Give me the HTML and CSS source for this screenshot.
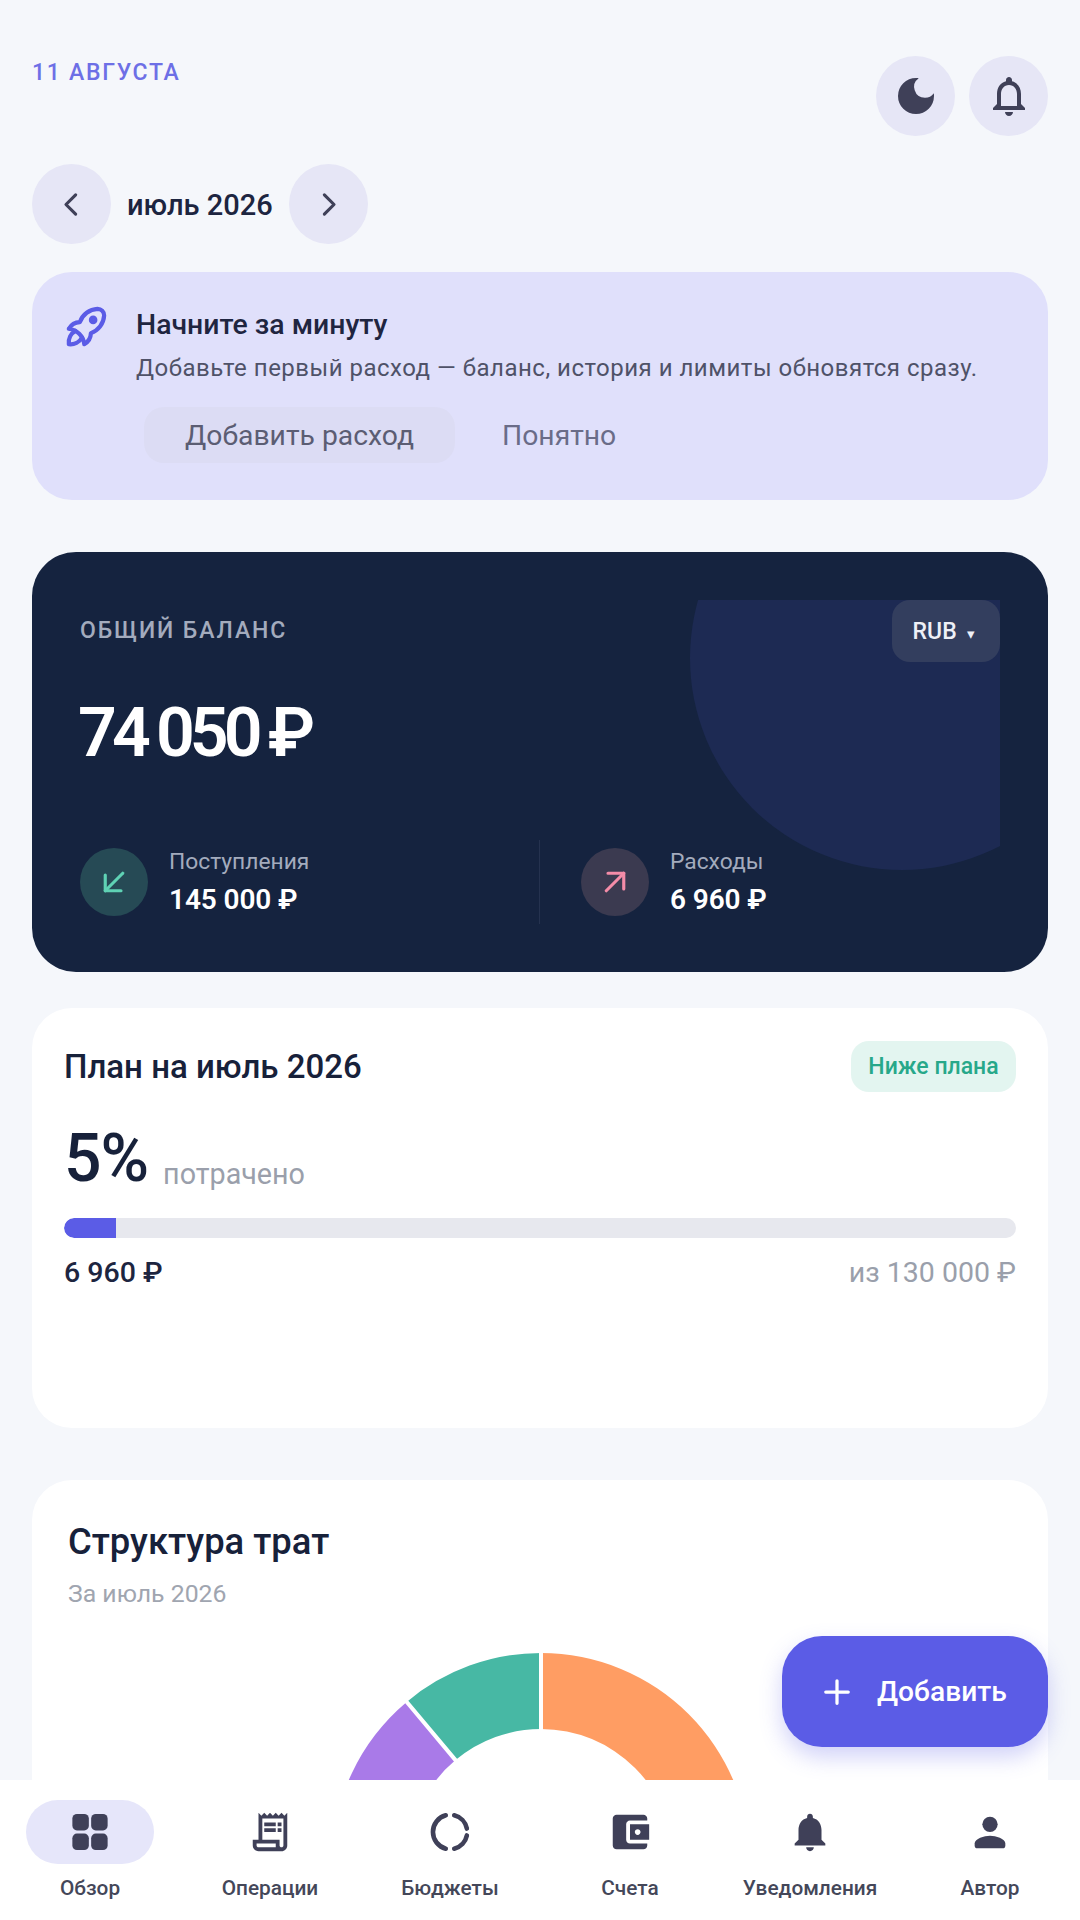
FILE: index.html
```html
<!DOCTYPE html>
<html lang="ru">
<head>
<meta charset="utf-8">
<title>Обзор</title>
<link rel="stylesheet" href="styles.css">
</head>
<body>
<div class="app">
  <main class="page">
    <header class="top">
      <div class="date">11 АВГУСТА</div>
      <div class="top-actions">
        <button class="round"><svg class="ic-48" viewBox="0 0 24 24"><path d="M12 3a9 9 0 1 0 9 9c0-.46-.04-.92-.1-1.36a5.389 5.389 0 0 1-4.4 2.26 5.403 5.403 0 0 1-3.14-9.8c-.44-.06-.9-.1-1.36-.1z"/></svg></button>
        <button class="round"><svg class="ic-48" viewBox="0 0 24 24"><path d="M12 22c1.1 0 2-.9 2-2h-4c0 1.1.9 2 2 2zm6-6v-5c0-3.07-1.63-5.64-4.5-6.32V4c0-.83-.67-1.5-1.5-1.5s-1.5.67-1.5 1.5v.68C7.64 5.36 6 7.92 6 11v5l-2 2v1h16v-1l-2-2zm-2 1H8v-6c0-2.48 1.51-4.5 4-4.5s4 2.02 4 4.5v6z"/></svg></button>
      </div>
    </header>

    <div class="month">
      <button class="round"><svg class="chev" viewBox="0 0 24 24"><path d="M15 5l-7 7 7 7"/></svg></button>
      <span class="month-label">июль 2026</span>
      <button class="round"><svg class="chev" viewBox="0 0 24 24"><path d="M9 5l7 7-7 7"/></svg></button>
    </div>

    <section class="banner">
      <svg class="rocket" viewBox="0 0 24 24"><path d="M4 13a8 8 0 0 1 7 7a6 6 0 0 0 3-5a9 9 0 0 0 6-8a3 3 0 0 0-3-3a9 9 0 0 0-8 6a6 6 0 0 0-5 3"/><path d="M7 14a6 6 0 0 0-3 6a6 6 0 0 0 6-3"/><circle cx="15" cy="9" r="1"/></svg>
      <div class="banner-body">
        <h2 class="banner-title">Начните за минуту</h2>
        <p class="banner-text">Добавьте первый расход — баланс, история и лимиты обновятся сразу.</p>
        <div class="banner-actions">
          <button class="btn-soft">Добавить расход</button>
          <button class="btn-text">Понятно</button>
        </div>
      </div>
    </section>

    <section class="balance">
      <div class="deco"><div class="deco-circle"></div></div>
      <div class="balance-head">
        <div class="balance-label">ОБЩИЙ БАЛАНС</div>
        <button class="currency">RUB <span class="caret">▾</span></button>
      </div>
      <div class="balance-sum">74 050 ₽</div>
      <div class="stats">
        <div class="stat">
          <span class="stat-icon in"><svg viewBox="0 0 24 24"><path d="M17 7L7 17"/><path d="M16 17H7V8"/></svg></span>
          <div><div class="stat-label">Поступления</div><div class="stat-value">145 000 ₽</div></div>
        </div>
        <div class="stat stat-right">
          <span class="stat-icon out"><svg viewBox="0 0 24 24"><path d="M7 17L17 7"/><path d="M8 7h9v9"/></svg></span>
          <div><div class="stat-label">Расходы</div><div class="stat-value">6 960 ₽</div></div>
        </div>
      </div>
    </section>

    <section class="plan">
      <div class="plan-head">
        <h2 class="plan-title">План на июль 2026</h2>
        <span class="badge">Ниже плана</span>
      </div>
      <div class="plan-pct"><span class="pct">5%</span><span class="pct-note">потрачено</span></div>
      <div class="bar"><div class="bar-fill" style="width:5.5%"></div></div>
      <div class="plan-foot"><span class="spent">6 960 ₽</span><span class="limit">из 130 000 ₽</span></div>
    </section>

    <section class="structure">
      <h2 class="structure-title">Структура трат</h2>
      <div class="structure-sub">За июль 2026</div>
      <svg class="donut" viewBox="-210 -210 420 420">
        <path fill="#ff9d63" d="M0-209A209 209 0 0 1 209 0L133 0A133 133 0 0 0 0-133Z"/>
        <path fill="#47b8a4" d="M0-209A209 209 0 0 0-134.3-160.1L-85.5-101.9A133 133 0 0 1 0-133Z"/>
        <path fill="#a97ae8" d="M-134.3-160.1A209 209 0 0 0-209 0L-133 0A133 133 0 0 1-85.5-101.9Z"/>
        <path class="gap" d="M0-212V-130M-136.3-162.5L-83.6-99.6"/>
      </svg>
    </section>
  </main>

  <button class="fab"><svg viewBox="0 0 24 24"><path d="M12 3v18M3 12h18"/></svg>Добавить</button>

  <nav class="nav">
    <a class="nav-item active"><span class="nav-icon"><svg viewBox="0 0 24 24"><rect x="2.8" y="2.6" width="8.6" height="8.6" rx="2.4"/><rect x="12.6" y="2.6" width="8.6" height="8.6" rx="2.4"/><rect x="2.8" y="12.8" width="8.6" height="8.6" rx="2.4"/><rect x="12.6" y="12.8" width="8.6" height="8.6" rx="2.4"/></svg></span><span class="nav-label">Обзор</span></a>
    <a class="nav-item"><span class="nav-icon"><svg viewBox="0 0 24 24"><path d="M19.5 3.5 18 2l-1.5 1.5L15 2l-1.5 1.5L12 2l-1.5 1.5L9 2 7.5 3.5 6 2v14H3v3c0 1.66 1.34 3 3 3h12c1.66 0 3-1.34 3-3V2l-1.5 1.5zM15 20H6c-.55 0-1-.45-1-1v-1h10v2zm4-1c0 .55-.45 1-1 1s-1-.45-1-1v-3H8V5h11v14z"/><path d="M9 7h6v2H9zm7 0h2v2h-2zm-7 3h6v2H9zm7 0h2v2h-2z"/></svg></span><span class="nav-label">Операции</span></a>
    <a class="nav-item"><span class="nav-icon"><svg viewBox="0 0 24 24"><path class="ring" d="M9.8 3.3A9 9 0 0 0 9.8 20.7M14.2 3.3A9 9 0 0 1 20.8 10.2M20.8 13.8A9 9 0 0 1 14.2 20.7"/></svg></span><span class="nav-label">Бюджеты</span></a>
    <a class="nav-item"><span class="nav-icon"><svg viewBox="0 0 24 24"><path d="M21 18v1c0 1.1-.9 2-2 2H5c-1.11 0-2-.9-2-2V5c0-1.1.89-2 2-2h14c1.1 0 2 .9 2 2v1h-9c-1.11 0-2 .9-2 2v8c0 1.1.89 2 2 2h9zm-9-2h10V8H12v8zm4-2.5c-.83 0-1.5-.67-1.5-1.5s.67-1.5 1.5-1.5 1.5.67 1.5 1.5-.67 1.5-1.5 1.5z"/></svg></span><span class="nav-label">Счета</span></a>
    <a class="nav-item"><span class="nav-icon"><svg viewBox="0 0 24 24"><path d="M12 22c1.1 0 2-.9 2-2h-4c0 1.1.89 2 2 2zm6-6v-5c0-3.07-1.64-5.64-4.5-6.32V4c0-.83-.67-1.5-1.5-1.5s-1.5.67-1.5 1.5v.68C7.63 5.36 6 7.92 6 11v5l-2 2v1h16v-1l-2-2z"/></svg></span><span class="nav-label">Уведомления</span></a>
    <a class="nav-item"><span class="nav-icon"><svg viewBox="0 0 24 24"><circle cx="12" cy="8" r="4"/><path d="M12 14c-3 0-8 1.5-8 4v1a1.5 1.5 0 0 0 1.5 1.5h13A1.5 1.5 0 0 0 20 19v-1c0-2.5-5-4-8-4z"/></svg></span><span class="nav-label">Автор</span></a>
  </nav>
</div>
</body>
</html>
```
FILE: styles.css
```css
* { box-sizing: border-box; }
html, body { margin: 0; padding: 0; }
body { font-family: Roboto, "Noto Sans", sans-serif; color: #14213d; background: #f5f7fb; }
button { font-family: inherit; border: 0; padding: 0; background: none; color: inherit; }
h2, p { margin: 0; }

.app { position: relative; width: 1080px; height: 1920px; overflow: hidden; background: #f5f7fb; }
.page { padding: 56px 32px 0; display: flex; flex-direction: column; }

.top { display: flex; justify-content: space-between; align-items: flex-start; }
.date { margin-top: 2px; font-size: 23px; line-height: 30px; font-weight: 500; letter-spacing: 1.7px; color: #6d6fe6; }
.top-actions { display: flex; gap: 14px; }
.round { width: 79px; height: 80px; border-radius: 50%; background: #e6e6f6; display: flex; align-items: center; justify-content: center; flex: none; }
.ic-48 { width: 48px; height: 48px; fill: #3f4058; }
.chev { width: 33px; height: 33px; fill: none; stroke: #3f4058; stroke-width: 2.3; stroke-linecap: round; stroke-linejoin: round; }

.month { margin-top: 28px; display: flex; align-items: center; gap: 16px; }
.month-label { font-size: 29px; line-height: 36px; padding-top: 2px; font-weight: 500; color: #1d2540; min-width: 146px; }

.banner { margin-top: 28px; height: 228px; border-radius: 40px; background: #e0e0fb; padding: 28px; display: flex; gap: 23px; }
.rocket { width: 53px; height: 53px; flex: none; fill: none; stroke: #5b5ce6; stroke-width: 1.9; stroke-linecap: round; stroke-linejoin: round; }
.banner-body { padding-top: 6px; }
.banner-title { font-size: 28.4px; line-height: 38px; font-weight: 500; color: #1f2540; }
.banner-text { margin-top: 8px; font-size: 24px; line-height: 32px; letter-spacing: .5px; color: #4f5268; white-space: nowrap; }
.banner-actions { margin-top: 23px; margin-left: 8px; display: flex; align-items: center; gap: 47px; }
.btn-soft { height: 56px; width: 311px; border-radius: 20px; background: #dcdcf4; font-size: 28.3px; color: #5b5d73; }
.btn-text { font-size: 28.3px; color: #6a6c88; }

.balance { position: relative; margin-top: 52px; height: 420px; border-radius: 44px; background: #15233f; padding: 48px; overflow: hidden; }
.deco { position: absolute; top: 48px; right: 48px; width: 400px; height: 300px; overflow: hidden; }
.deco-circle { position: absolute; left: 90px; top: -154px; width: 424px; height: 424px; border-radius: 50%; background: #1d2a53; }
.balance-head { position: relative; display: flex; justify-content: space-between; align-items: flex-start; }
.balance-label { margin-top: 16px; font-size: 23px; line-height: 30px; font-weight: 500; letter-spacing: 1.9px; color: #a3abbd; }
.currency { width: 108px; height: 62px; border-radius: 18px; background: #333e5e; color: #eef0f7; font-size: 23px; font-weight: 500; padding-right: 4px; word-spacing: 5px; }
.caret { font-size: 15px; }
.balance-sum { position: relative; margin-top: 26px; margin-left: -2px; font-size: 68px; line-height: 90px; font-weight: 600; letter-spacing: -4.9px; word-spacing: -2px; color: #fff; }
.stats { position: relative; margin-top: 62px; display: grid; grid-template-columns: 459px 1fr; }
.stat { display: flex; align-items: center; gap: 21px; height: 84px; }
.stat-right { border-left: 1px solid #25324f; padding-left: 41px; }
.stat-icon { width: 68px; height: 68px; border-radius: 50%; display: flex; align-items: center; justify-content: center; flex: none; }
.stat-icon svg { width: 42px; height: 42px; fill: none; stroke-width: 1.8; stroke-linecap: round; stroke-linejoin: round; }
.in { background: #264a55; }
.in svg { stroke: #5fd2b4; }
.out { background: #3b3a50; }
.out svg { stroke: #f48ca8; }
.stat-label { font-size: 22.8px; line-height: 30px; color: #a3abbd; }
.stat-value { margin-top: 6px; font-size: 28px; line-height: 34px; font-weight: 600; letter-spacing: -.1px; color: #fff; }

.plan { margin-top: 36px; height: 420px; border-radius: 40px; background: #fff; padding: 33px 32px; }
.plan-head { display: flex; justify-content: space-between; align-items: center; }
.plan-title { font-size: 33px; font-weight: 500; color: #17213a; }
.badge { height: 51px; width: 165px; border-radius: 18px; background: #e3f5f0; color: #27a88a; font-size: 23px; font-weight: 500; display: flex; align-items: center; justify-content: center; }
.plan-pct { margin-top: 24px; display: flex; align-items: flex-end; gap: 15px; height: 86px; }
.pct { font-size: 66px; line-height: 86px; font-weight: 500; color: #17213a; letter-spacing: -1px; }
.pct-note { font-size: 28.7px; line-height: 34px; padding-bottom: 11px; color: #9a9fab; }
.bar { margin-top: 16px; height: 20px; border-radius: 10px; background: #e7e8ee; overflow: hidden; }
.bar-fill { height: 100%; background: #5b5ce6; border-radius: 10px 0 0 10px; }
.plan-foot { margin-top: 18px; display: flex; justify-content: space-between; font-size: 28.5px; line-height: 34px; }
.spent { font-weight: 500; color: #1d2540; }
.limit { color: #9a9fab; }

.structure { margin-top: 52px; height: 700px; border-radius: 40px; background: #fff; padding: 40px 36px; display: flex; flex-direction: column; }
.structure-title { font-size: 36.4px; line-height: 44px; font-weight: 500; color: #17213a; }
.structure-sub { margin-top: 14px; font-size: 24.8px; line-height: 32px; color: #a0a5b0; }
.donut { align-self: center; margin-top: 42px; margin-left: 2px; width: 420px; height: 420px; flex: none; }
.gap { fill: none; stroke: #fff; stroke-width: 4; }

.fab { position: absolute; left: 782px; top: 1636px; width: 266px; height: 111px; border-radius: 40px; background: #5b5ce6; color: #fff; font-size: 28.2px; font-weight: 500; display: flex; align-items: center; gap: 25px; padding-left: 40px; box-shadow: 0 10px 22px rgba(91,92,230,.28); }
.fab svg { width: 30px; height: 30px; fill: none; stroke: #fff; stroke-width: 2.6; stroke-linecap: round; }

.nav { position: absolute; left: 0; right: 0; bottom: 0; height: 140px; background: #fff; display: grid; grid-template-columns: repeat(6, 180px); padding-top: 20px; }
.nav-item { display: flex; flex-direction: column; align-items: center; gap: 11px; }
.nav-icon { width: 128px; height: 64px; border-radius: 32px; display: flex; align-items: center; justify-content: center; }
.active .nav-icon { background: #e6e6fa; }
.nav-icon svg { width: 46px; height: 46px; fill: #3f4058; }
.ring { fill: none; stroke: #3f4058; stroke-width: 2.4; stroke-linecap: round; }
.nav-label { font-size: 20.8px; line-height: 26px; font-weight: 500; color: #444759; white-space: nowrap; }
```
